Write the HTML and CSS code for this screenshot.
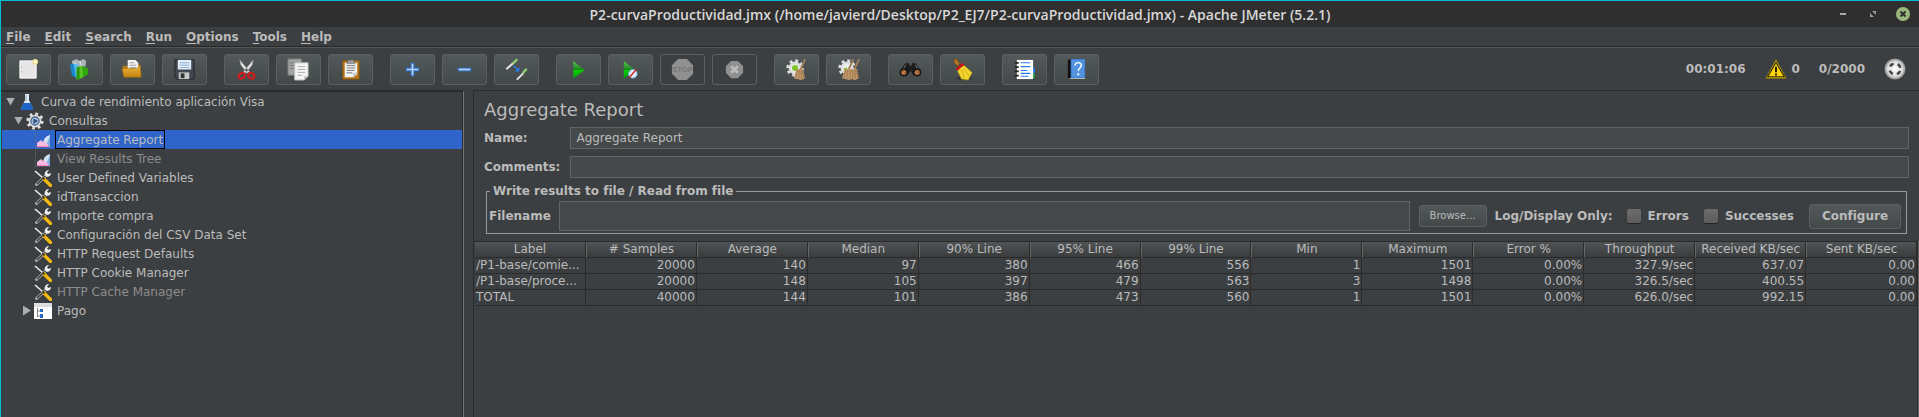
FILE: index.html
```html
<!DOCTYPE html>
<html lang="es">
<head>
<meta charset="utf-8">
<title>P2-curvaProductividad.jmx - Apache JMeter (5.2.1)</title>
<link rel="stylesheet" href="styles.css">
</head>
<body>
<svg class="defs" aria-hidden="true">
  <defs>
    <linearGradient id="green" x1="0" y1="0" x2="0" y2="1"><stop offset="0" stop-color="#5cc05c"/><stop offset=".5" stop-color="#178a17"/><stop offset=".52" stop-color="#06d206"/><stop offset="1" stop-color="#0a9a0a"/></linearGradient>
    <linearGradient id="gold" x1="0" y1="0" x2="0" y2="1"><stop offset="0" stop-color="#f0b73c"/><stop offset="1" stop-color="#c48612"/></linearGradient>
    <radialGradient id="ball"><stop offset="0" stop-color="#fff"/><stop offset=".7" stop-color="#ddd"/><stop offset="1" stop-color="#888"/></radialGradient>
    <symbol id="tools" viewBox="0 0 18 18">
      <path d="M1 2l8 7" stroke="#eee" stroke-width="1.6"/>
      <path d="M2.5 15.500L13 5.500" stroke="#aaa" stroke-width="3" stroke-linecap="round"/>
      <path d="M3 15L12.500 6" stroke="#333" stroke-width="1.200"/>
      <path d="M11 6.500c-1-3 1-5.500 4-5.500l-2 2.500 1 1.500 3-1c0 3-2.500 4.500-5 3.500z" fill="#eee"/>
      <path d="M10 10l6.500 6.500" stroke="#f4b90f" stroke-width="3.200" stroke-linecap="round"/>
      <path d="M8.500 8.500l2 2" stroke="#222" stroke-width="1.500"/>
    </symbol>
    <symbol id="chart" viewBox="0 0 18 18">
      <path d="M1.500 0v17M1 16.500h16" stroke="#6b6e70" stroke-dasharray="1 1" fill="none"/>
      <path d="M9 12c1-5 3-7 7-8v12l-7-1z" fill="#cfe4f8"/>
      <path d="M13 12l3-7v11h-3z" fill="#7fabe0"/>
      <path d="M3 16v-4l4-3 2 2 2-1 1 2 2 2v2z" fill="#f7bbdf"/>
      <path d="M3 15.500h12" stroke="#ff7bd0"/>
    </symbol>
    <symbol id="gear" viewBox="0 0 24 24">
      <circle cx="12" cy="12" r="9.500" fill="none" stroke="#ddd" stroke-width="4" stroke-dasharray="3.730 3.730"/>
      <circle cx="12" cy="12" r="7" fill="#eee" stroke="#ddd" stroke-width="3"/>
    </symbol>
    <symbol id="broom" viewBox="0 0 14 24">
      <path d="M13 1L8 12" stroke="#a17f58" stroke-width="2" stroke-linecap="round"/>
      <path d="M4 11l7 0 2 10-4 2-8-2z" fill="#c69c6c"/>
      <path d="M5 12l-2 9M7 12l-1 10M9 12v10M10 12l2 9" stroke="#8c6a44" stroke-width=".8"/>
    </symbol>
  </defs>
</svg>

<div class="window">
  <header class="titlebar">
    <h1 class="title">P2-curvaProductividad.jmx (/home/javierd/Desktop/P2_EJ7/P2-curvaProductividad.jmx) - Apache JMeter (5.2.1)</h1>
    <div class="controls">
      <button aria-label="Minimize"><svg width="14" height="14"><path d="M4 7h6" stroke="#aaa" stroke-width="2"/></svg></button>
      <button aria-label="Restore"><svg width="14" height="14"><path d="M6 4h4v4zM4 6v4h4z" fill="#999"/></svg></button>
      <button aria-label="Close"><svg width="14" height="14"><circle cx="7" cy="7" r="7" fill="#9ab87c"/><path d="M4.500 4.500l5 5m0-5l-5 5" stroke="#2f2f2f" stroke-width="2"/></svg></button>
    </div>
  </header>

  <nav class="menubar">
    <button><u>F</u>ile</button><button><u>E</u>dit</button><button><u>S</u>earch</button><button><u>R</u>un</button><button><u>O</u>ptions</button><button><u>T</u>ools</button><button><u>H</u>elp</button>
  </nav>

  <div class="toolbar">
    <div class="group">
      <button aria-label="New"><svg viewBox="0 0 24 24"><path d="M3 3h17v18H3z" fill="#e6e6e6" stroke="#fff"/><path d="M5 9v1m0 4v1" stroke="#888"/><circle cx="19" cy="4" r="3" fill="#efe48a"/><circle cx="19" cy="4" r="1.500" fill="#fff"/></svg></button>
      <button aria-label="Templates"><svg viewBox="0 0 24 24"><path d="M3 3l5-2 3 2 4-2 3 2-1 6H4z" fill="#a9b5b9"/><path d="M5 4l3 4m3-5l2 5" stroke="#e4eaec"/><path d="M1 7l4-1 3 15-5-3z" fill="#1788cf"/><path d="M5 6l5 1-1 14-2-1z" fill="#54b9ee"/><path d="M8 10l6-2 1 12-7 3z" fill="#56c421"/><path d="M8 10l3-1v13l-3 1z" fill="#2e940c"/><path d="M14 8l6 3v6l-5 3z" fill="#2fa80b"/><path d="M20 19l2-1-6 3z" fill="#2b2e2f"/></svg></button>
      <button aria-label="Open"><svg viewBox="0 0 24 24"><path d="M2 8h6l2-2h9v8H2z" fill="#b77d14"/><path d="M7 2h8l3 3v9H7z" fill="#f4f4f4"/><path d="M9 5h5M9 7.500h7M9 10h7" stroke="#999"/><path d="M1 11h16l3-4 1 13H3z" fill="url(#gold)" stroke="#a26c0b" stroke-width=".6"/></svg></button>
      <button aria-label="Save"><svg viewBox="0 0 24 24"><path d="M2 2h20v20H4l-2-2z" fill="#424750" stroke="#22252a"/><path d="M5 2h14v10H5z" fill="#e3f0fa"/><path d="M7 5h10M7 7.500h10M7 10h10" stroke="#8aaed0"/><path d="M6 15h11v7H6z" fill="#c9c9c9"/><path d="M8 16h4v5H8z" fill="#333"/></svg></button>
    </div>
    <div class="group">
      <button aria-label="Cut"><svg viewBox="0 0 24 24"><path d="M5 2l1 5 7 9 2-2zM19 2l-1 5-7 9-2-2z" fill="#e6e6e6" stroke="#999" stroke-width=".5"/><ellipse cx="7" cy="18.500" rx="3.500" ry="2.800" transform="rotate(-35 7 18.500)" fill="none" stroke="#d51c1c" stroke-width="2.200"/><ellipse cx="17" cy="18.500" rx="3.500" ry="2.800" transform="rotate(35 17 18.500)" fill="none" stroke="#d51c1c" stroke-width="2.200"/></svg></button>
      <button aria-label="Copy"><svg viewBox="0 0 24 24"><path d="M1 1h14v17H1z" fill="#a3a5a5" stroke="#777"/><path d="M3 5h9M3 8h5M3 11h4" stroke="#777"/><path d="M8 5h14v14l-4 4H8z" fill="#f5f5f5" stroke="#bbb"/><path d="M11 9h8M11 12h8M11 15h8M11 18h5" stroke="#aaa"/><path d="M18 23v-4h4z" fill="#bbb"/></svg></button>
      <button aria-label="Paste"><svg viewBox="0 0 24 24"><path d="M4 3h17v19H4z" fill="#b9791c" stroke="#8c5a10"/><path d="M6 5h13v12l-4 3H6z" fill="#f2f2f2"/><path d="M8 8h9M8 10.500h9M8 13h8M8 15.500h6" stroke="#777"/><path d="M15 20v-4l4-1z" fill="#bbb"/><path d="M8 6l2-4h5l2 4z" fill="#999" stroke="#666" stroke-width=".5"/></svg></button>
    </div>
    <div class="group">
      <button aria-label="Expand all"><svg viewBox="0 0 24 24"><path d="M12 5v14M5 12h14" stroke="#2d6fca" stroke-width="4"/><path d="M12 6v12M6 12h12" stroke="#b9d3f2" stroke-width="1.800"/></svg></button>
      <button aria-label="Collapse all"><svg viewBox="0 0 24 24"><path d="M5 12h14" stroke="#2d6fca" stroke-width="4"/><path d="M6 12h12" stroke="#b9d3f2" stroke-width="1.800"/></svg></button>
      <button aria-label="Toggle"><svg viewBox="0 0 24 24"><path d="M2 11l7-6M13 22l6-6" stroke="#e8e8e8" stroke-width="2" stroke-linecap="round"/><path d="M9 5l3-3M19 15l3-3" stroke="#8cc46a" stroke-width="2.600" stroke-linecap="round"/><path d="M9 8l4 4" stroke="#2b7ae8" stroke-width="1.500"/><path d="M15 9v5h-5z" fill="#2b7ae8"/></svg></button>
    </div>
    <div class="group">
      <button aria-label="Start"><svg viewBox="0 0 24 24"><path d="M6.500 3l12 9.500-12 9z" fill="url(#green)"/></svg></button>
      <button aria-label="Start no pauses"><svg viewBox="0 0 24 24"><path d="M5 3l12 9.500-12 9z" fill="url(#green)"/><circle cx="14.500" cy="16.500" r="4.500" fill="#dcecff" stroke="#6aa2dc"/><path d="M11 20l7-8" stroke="#d22" stroke-width="1.500"/></svg></button>
      <button class="off" aria-label="Stop" disabled><svg viewBox="0 0 24 24"><path d="M7.500 1h9L23 7.500v9L16.500 23h-9L1 16.500v-9z" fill="#909090"/><text x="12" y="15" class="stop-text">STOP</text></svg></button>
      <button class="off" aria-label="Shutdown" disabled><svg viewBox="0 0 24 24"><path d="M8.500 3h7L21 8.500v7L15.500 21h-7L3 15.500v-7z" fill="#909090"/><path d="M8.500 8.500l7 7m0-7l-7 7" stroke="#bbb" stroke-width="3"/></svg></button>
    </div>
    <div class="group">
      <button aria-label="Clear"><svg viewBox="0 0 24 24"><use href="#gear" x="1" y="1" width="19" height="19"/><circle cx="10.500" cy="10.500" r="3.200" fill="#7cc628"/><use href="#broom" x="8" y="1" width="14" height="23"/></svg></button>
      <button aria-label="Clear all"><svg viewBox="0 0 24 24"><use href="#gear" x="1" y="1" width="19" height="19"/><circle cx="9" cy="12" r="2" fill="#7cc628"/><use href="#broom" x="4" y="1" width="14" height="23"/><use href="#broom" x="10" y="1" width="14" height="23"/></svg></button>
    </div>
    <div class="group">
      <button aria-label="Search"><svg viewBox="0 0 24 24"><path d="M6 6l4-1 1 3h2l1-3 4 1 4 8-2 4h-5l-3-5-3 5H4l-3-4z" fill="#1c1c1c"/><path d="M7 7l-3 6M17 7l3 6" stroke="#777"/><circle cx="5" cy="15" r="3.500" fill="#a96536" stroke="#151515" stroke-width="1.500"/><circle cx="19" cy="15" r="3.500" fill="#a96536" stroke="#151515" stroke-width="1.500"/><path d="M4 16l2-2m11 2l2-2" stroke="#ddae88"/></svg></button>
      <button aria-label="Reset search"><svg viewBox="0 0 24 24"><ellipse cx="14" cy="21" rx="8" ry="2" fill="#34383a"/><path d="M3 2l3-1 3 5-2 2-3-2z" fill="#b47b2c" stroke="#7e5213"/><path d="M9 9l5-1 8 7-4 8-7-1-4-8z" fill="#f2d52f" stroke="#b89a12" stroke-width=".6"/><path d="M11 12l3 9m-1-10l6 8" stroke="#cfae18"/><path d="M6 12l7-6" stroke="#cf1414" stroke-width="3"/></svg></button>
    </div>
    <div class="group">
      <button aria-label="Function helper"><svg viewBox="0 0 24 24"><path d="M19 10h4v6h-4z" fill="#2372d6"/><path d="M19 16h4v5h-4z" fill="#1c9b30"/><path d="M4 2h17v20H4z" fill="#fff"/><path d="M8 5h10M8 9h10M8 13h7M8 16h10M8 19h8" stroke="#247bf0" stroke-width="1.200"/><path d="M2 5h4M2 9.500h4M2 14h4M2 18.500h4" stroke="#222" stroke-width="1.800"/></svg></button>
      <button aria-label="Help"><svg viewBox="0 0 24 24"><path d="M3 2l3-1v20H3z" fill="#111"/><path d="M6 1h15v20H6z" fill="#3a7fd2"/><path d="M7 2h13v18H7z" fill="#5493e0"/><path d="M6 21h15v1H4z" fill="#ddd"/><path d="M10.500 8c0-4.500 7-4 6.500 0-.3 2.500-3.200 2.500-3.200 5.500" fill="none" stroke="#fff" stroke-width="1.500"/><circle cx="13.800" cy="17" r="1.200" fill="#fff"/></svg></button>
    </div>
    <div class="status">
      <span class="timer">00:01:06</span>
      <button class="warn"><svg viewBox="0 0 24 24"><path d="M12 2L23 22H1z" fill="#f6cd0a" stroke="#8b7310" stroke-linejoin="round"/><path d="M12 5L21 20.500H3z" fill="#ffd60a" stroke="#2a2608" stroke-width="1.200"/><path d="M12 9.500v6m0 1.500v2" stroke="#111" stroke-width="2"/></svg>0</button>
      <span>0/2000</span>
      <svg viewBox="0 0 24 24"><circle cx="12" cy="12" r="11.500" fill="url(#ball)"/><circle cx="12" cy="12" r="6" fill="none" stroke="#444" stroke-width="2.800" stroke-dasharray="4.700 4.725" stroke-dashoffset="-2.350"/></svg>
    </div>
  </div>

  <div class="workspace">
    <aside class="tree">
      <ul>
        <li class="lvl0"><span class="arrow open"></span><svg viewBox="0 0 18 18"><path d="M7 1h4v6l4 9H3l4-9z" fill="#dfe9f5"/><path d="M5.500 10h7l3 7h-13z" fill="#1c62c8"/><path d="M8 2v6" stroke="#8aa" /></svg><span class="label">Curva de rendimiento aplicación Visa</span></li>
        <li class="lvl1"><span class="arrow open"></span><svg viewBox="0 0 24 24"><use href="#gear" width="24" height="24"/><circle cx="12" cy="12" r="5.500" fill="#9db9d9" stroke="#405a7c" stroke-width="1.500"/><path d="M10 8.500l6 3.500-6 3.500z" fill="#2d4f7c"/></svg><span class="label">Consultas</span></li>
        <li class="lvl2 selected"><svg><use href="#chart"/></svg><span class="label">Aggregate Report</span></li>
        <li class="lvl2 disabled"><svg><use href="#chart"/></svg><span class="label">View Results Tree</span></li>
        <li class="lvl2"><svg><use href="#tools"/></svg><span class="label">User Defined Variables</span></li>
        <li class="lvl2"><svg><use href="#tools"/></svg><span class="label">idTransaccion</span></li>
        <li class="lvl2"><svg><use href="#tools"/></svg><span class="label">Importe compra</span></li>
        <li class="lvl2"><svg><use href="#tools"/></svg><span class="label">Configuración del CSV Data Set</span></li>
        <li class="lvl2"><svg><use href="#tools"/></svg><span class="label">HTTP Request Defaults</span></li>
        <li class="lvl2"><svg><use href="#tools"/></svg><span class="label">HTTP Cookie Manager</span></li>
        <li class="lvl2 disabled"><svg><use href="#tools"/></svg><span class="label">HTTP Cache Manager</span></li>
        <li class="lvl1 leaf"><span class="arrow"></span><svg viewBox="0 0 18 18"><path d="M0 1h18v16H0z" fill="#fff"/><path d="M0 1h18v4H0z" fill="#ddd"/><path d="M3.500 6v9M4 9h3M4 14h3" stroke="#888" fill="none"/><path d="M6 7h3v3H6zM6 12h3v4H6z" fill="#2568c4"/></svg><span class="label">Pago</span></li>
      </ul>
    </aside>

    <main class="panel">
      <h2>Aggregate Report</h2>
      <form class="fields">
        <label for="name">Name:</label><input id="name" type="text" value="Aggregate Report">
        <label for="comments">Comments:</label><input id="comments" type="text">
      </form>
      <fieldset>
        <legend>Write results to file / Read from file</legend>
        <div class="file-row">
          <label for="filename">Filename</label>
          <input id="filename" type="text">
          <button class="browse">Browse...</button>
          <span class="log">Log/Display Only:</span>
          <label class="check"><input type="checkbox">Errors</label>
          <label class="check"><input type="checkbox">Successes</label>
          <button class="configure">Configure</button>
        </div>
      </fieldset>
      <div class="results">
        <table>
          <thead><tr><th>Label</th><th># Samples</th><th>Average</th><th>Median</th><th>90% Line</th><th>95% Line</th><th>99% Line</th><th>Min</th><th>Maximum</th><th>Error %</th><th>Throughput</th><th>Received KB/sec</th><th>Sent KB/sec</th></tr></thead>
          <tbody>
            <tr><td>/P1-base/comie...</td><td>20000</td><td>140</td><td>97</td><td>380</td><td>466</td><td>556</td><td>1</td><td>1501</td><td>0.00%</td><td>327.9/sec</td><td>637.07</td><td>0.00</td></tr>
            <tr><td>/P1-base/proce...</td><td>20000</td><td>148</td><td>105</td><td>397</td><td>479</td><td>563</td><td>3</td><td>1498</td><td>0.00%</td><td>326.5/sec</td><td>400.55</td><td>0.00</td></tr>
            <tr><td>TOTAL</td><td>40000</td><td>144</td><td>101</td><td>386</td><td>473</td><td>560</td><td>1</td><td>1501</td><td>0.00%</td><td>626.0/sec</td><td>992.15</td><td>0.00</td></tr>
          </tbody>
        </table>
      </div>
    </main>
  </div>
</div>
</body>
</html>
```
FILE: styles.css
```css
* { box-sizing: border-box; }

body {
  margin: 0;
  background: #3c3f41;
  color: #bbb;
  font: 12px/16px "DejaVu Sans", Verdana, sans-serif;
}

button, input { font: inherit; color: inherit; }
svg { display: block; flex: none; }
.defs { position: absolute; width: 0; height: 0; }

.window {
  display: flex;
  flex-direction: column;
  min-height: 100vh;
  border-top: 1px solid #00bcd4;
  border-left: 1px solid #00bcd4;
}

/* Title bar */
.titlebar {
  display: grid;
  grid-template-columns: 1fr auto 1fr;
  align-items: center;
  height: 26px;
  background: #2f2f2f;
}
.title {
  grid-column: 2;
  margin: 0;
  padding-top: 2px;
  font: 600 14px/18px "Open Sans", "Noto Sans", sans-serif;
  color: #d8d8d8;
}
.controls { display: flex; justify-content: flex-end; gap: 16px; padding-right: 9px; }
.controls button { padding: 0; border: 0; background: none; }

/* Menu */
.menubar {
  display: flex;
  gap: 14px;
  height: 20px;
  padding-left: 5px;
  border-bottom: 1px solid #282828;
}
.menubar button {
  padding: 0;
  border: 0;
  background: none;
  font-weight: bold;
  line-height: 18px;
}
.menubar u { text-underline-offset: 2px; }

/* Toolbar */
.toolbar {
  display: flex;
  align-items: center;
  gap: 17px;
  height: 43px;
  padding: 0 13px 0 5px;
  border-top: 1px solid #555;
}
.group { display: flex; gap: 7px; }
.group button {
  display: grid;
  place-items: center;
  width: 45px;
  height: 31px;
  padding: 0;
  border: 1px solid #5e6060;
  border-radius: 3px;
  background: linear-gradient(#53585a, #434849);
}
.group .off { background: none; }
.group svg { width: 23px; height: 23px; }
.stop-text { font: bold 8px "Liberation Sans", sans-serif; fill: #777; text-anchor: middle; }
.status { display: flex; align-items: center; gap: 19px; margin-left: auto; font-weight: bold; }
.status svg { width: 22px; height: 22px; }
.warn { display: flex; align-items: center; gap: 5px; padding: 0; border: 0; background: none; font-weight: bold; }

/* Split view */
.workspace { display: flex; flex: 1; gap: 9px; }
.tree {
  flex: 0 0 463px;
  padding-left: 1px;
  border-top: 2px solid #2b2b2b;
  border-right: 1px solid #777;
}
.tree ul { margin: 0; padding: 0; list-style: none; border-right: 1px solid #2b2b2b; height: 100%; }
.tree li { display: flex; align-items: center; height: 19px; padding-left: 4px; }
.tree li svg { width: 18px; height: 18px; }
.tree .label { margin-left: 3px; padding: 1px 1px 0; line-height: 16px; border: 1px solid transparent; }
.tree .lvl1 { padding-left: 12px; }
.tree .lvl2 { padding-left: 32px; }
.tree .leaf { padding-left: 20px; }
.tree .disabled { color: #8c8c8c; }
.tree .selected { background: #2f65ca; }
.tree .selected .label { border-color: #000; }
.arrow {
  width: 8px;
  height: 10px;
  margin: 0 3px 0 1px;
  background: #adadad;
  clip-path: polygon(0 0, 100% 50%, 0 100%);
}
.arrow.open { width: 9px; height: 8px; margin: 0 3px 0 0; clip-path: polygon(0 0, 100% 0, 50% 100%); }

/* Editor panel */
.panel {
  display: flex;
  flex: 1;
  flex-direction: column;
  min-width: 0;
  padding-top: 9px;
  border: solid #2b2b2b;
  border-width: 1px 0 0 1px;
}
h2 { margin: 0 10px 7px; font-size: 18px; font-weight: normal; line-height: 20px; }
.fields {
  display: grid;
  grid-template-columns: auto 1fr;
  gap: 7px 10px;
  align-items: center;
  padding: 0 10px;
  font-weight: bold;
}
input[type="text"] {
  min-width: 0;
  height: 22px;
  padding: 0 5px;
  border: 1px solid #646464;
  background: #45494a;
  font-weight: normal;
}
fieldset {
  min-width: 0;
  margin: 5px 12px 7px;
  padding: 0 5px 2px 2px;
  border: 1px solid #999;
  font-weight: bold;
}
legend { margin-left: 1px; padding: 0 3px; }
.file-row { display: flex; align-items: center; margin-top: 2px; }
.file-row #filename { flex: 1; height: 30px; margin: 0 9px 0 8px; }
.file-row button {
  padding: 0;
  border: 1px solid #5e6060;
  border-radius: 3px;
  background: linear-gradient(#53585a, #434849);
}
.file-row .browse { width: 68px; height: 22px; font-size: 10px; font-weight: normal; line-height: 12px; }
.file-row .configure { width: 92px; height: 25px; margin-left: 15px; }
.log { margin: 0 14px 0 8px; }
.check { display: flex; align-items: center; gap: 7px; }
.check + .check { margin-left: 15px; }
.check input {
  appearance: none;
  width: 14px;
  height: 14px;
  margin: 0;
  border-radius: 2px;
  background: linear-gradient(#6e6b6b, #5e5c5c);
  box-shadow: 0 1px 1px #222;
}

/* Results */
.results {
  flex: 1;
  margin-right: 1px;
  padding-left: 1px;
  border: solid #2b2b2b;
  border-width: 1px 1px 0 0;
  box-shadow: 1px 0 #666;
}
table { width: 100%; table-layout: fixed; border-collapse: separate; border-spacing: 0; }
th, td {
  overflow: hidden;
  padding: 0 1px;
  border: solid #2b2b2b;
  border-width: 0 1px 1px 0;
  line-height: 15px;
  text-align: right;
  white-space: nowrap;
}
th {
  border-left: 1px solid #666;
  background: linear-gradient(#505456, #3a3c3d);
  font-weight: normal;
  text-align: center;
}
th:first-child { border-left: 0; }
td:first-child { text-align: left; }
```
